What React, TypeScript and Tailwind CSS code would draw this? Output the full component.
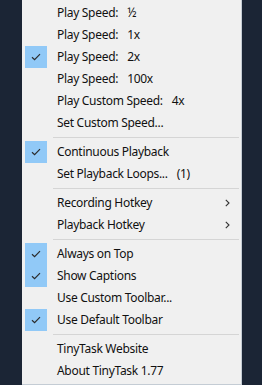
import React from 'react';

type Item =
  | { kind: 'sep' }
  | { kind: 'item'; label: string; value?: string; checked?: boolean; submenu?: boolean };

const items: Item[] = [
  { kind: 'item', label: 'Play Speed:', value: '½' },
  { kind: 'item', label: 'Play Speed:', value: '1x' },
  { kind: 'item', label: 'Play Speed:', value: '2x', checked: true },
  { kind: 'item', label: 'Play Speed:', value: '100x' },
  { kind: 'item', label: 'Play Custom Speed:', value: '4x' },
  { kind: 'item', label: 'Set Custom Speed...' },
  { kind: 'sep' },
  { kind: 'item', label: 'Continuous Playback', checked: true },
  { kind: 'item', label: 'Set Playback Loops...', value: '(1)' },
  { kind: 'sep' },
  { kind: 'item', label: 'Recording Hotkey', submenu: true },
  { kind: 'item', label: 'Playback Hotkey', submenu: true },
  { kind: 'sep' },
  { kind: 'item', label: 'Always on Top', checked: true },
  { kind: 'item', label: 'Show Captions', checked: true },
  { kind: 'item', label: 'Use Custom Toolbar...' },
  { kind: 'item', label: 'Use Default Toolbar', checked: true },
  { kind: 'sep' },
  { kind: 'item', label: 'TinyTask Website' },
  { kind: 'item', label: 'About TinyTask 1.77' },
];

const CheckMark = () => (
  <svg width="10" height="8" viewBox="0 0 10 8" fill="none">
    <path d="M1 4.2 L3.6 6.6 L9 1.2" stroke="#2b2b2b" strokeWidth="1.2" />
  </svg>
);

const Chevron = () => (
  <svg width="5" height="8" viewBox="0 0 5 8" fill="none">
    <path d="M0.8 0.8 L4 4 L0.8 7.2" stroke="#333" strokeWidth="1.1" />
  </svg>
);

const App: React.FC = () => {
  return (
    <div
      className="w-[262px] h-[385px] overflow-hidden bg-[#1b2535] pl-[22px]"
      style={{ fontFamily: '"Noto Sans", "Open Sans", sans-serif' }}
    >
      <div className="w-[220px] h-[385px] bg-[#f0f0f0] border-r border-b border-[#c4ccd4] pt-[2px]">
        {items.map((it, i) =>
          it.kind === 'sep' ? (
            <div key={i} className="h-[7px] flex items-center pl-[31px] pr-[2px]">
              <div className="h-px w-full bg-[#d5d5d5]" />
            </div>
          ) : (
            <div
              key={i}
              className="h-[22px] flex items-center pl-[3px] text-[12px] tracking-[-0.3px] text-[#111]"
            >
              <div
                className={`w-[22px] h-[22px] flex items-center justify-center ${
                  it.checked ? 'bg-[#91c9f7]' : ''
                }`}
              >
                {it.checked && <CheckMark />}
              </div>
              <span className="ml-[10px] whitespace-pre">{it.label}</span>
              {it.value && <span className="ml-[9px]">{it.value}</span>}
              {it.submenu && (
                <span className="ml-auto mr-[11px] flex items-center">
                  <Chevron />
                </span>
              )}
            </div>
          )
        )}
      </div>
    </div>
  );
};

export default App;
